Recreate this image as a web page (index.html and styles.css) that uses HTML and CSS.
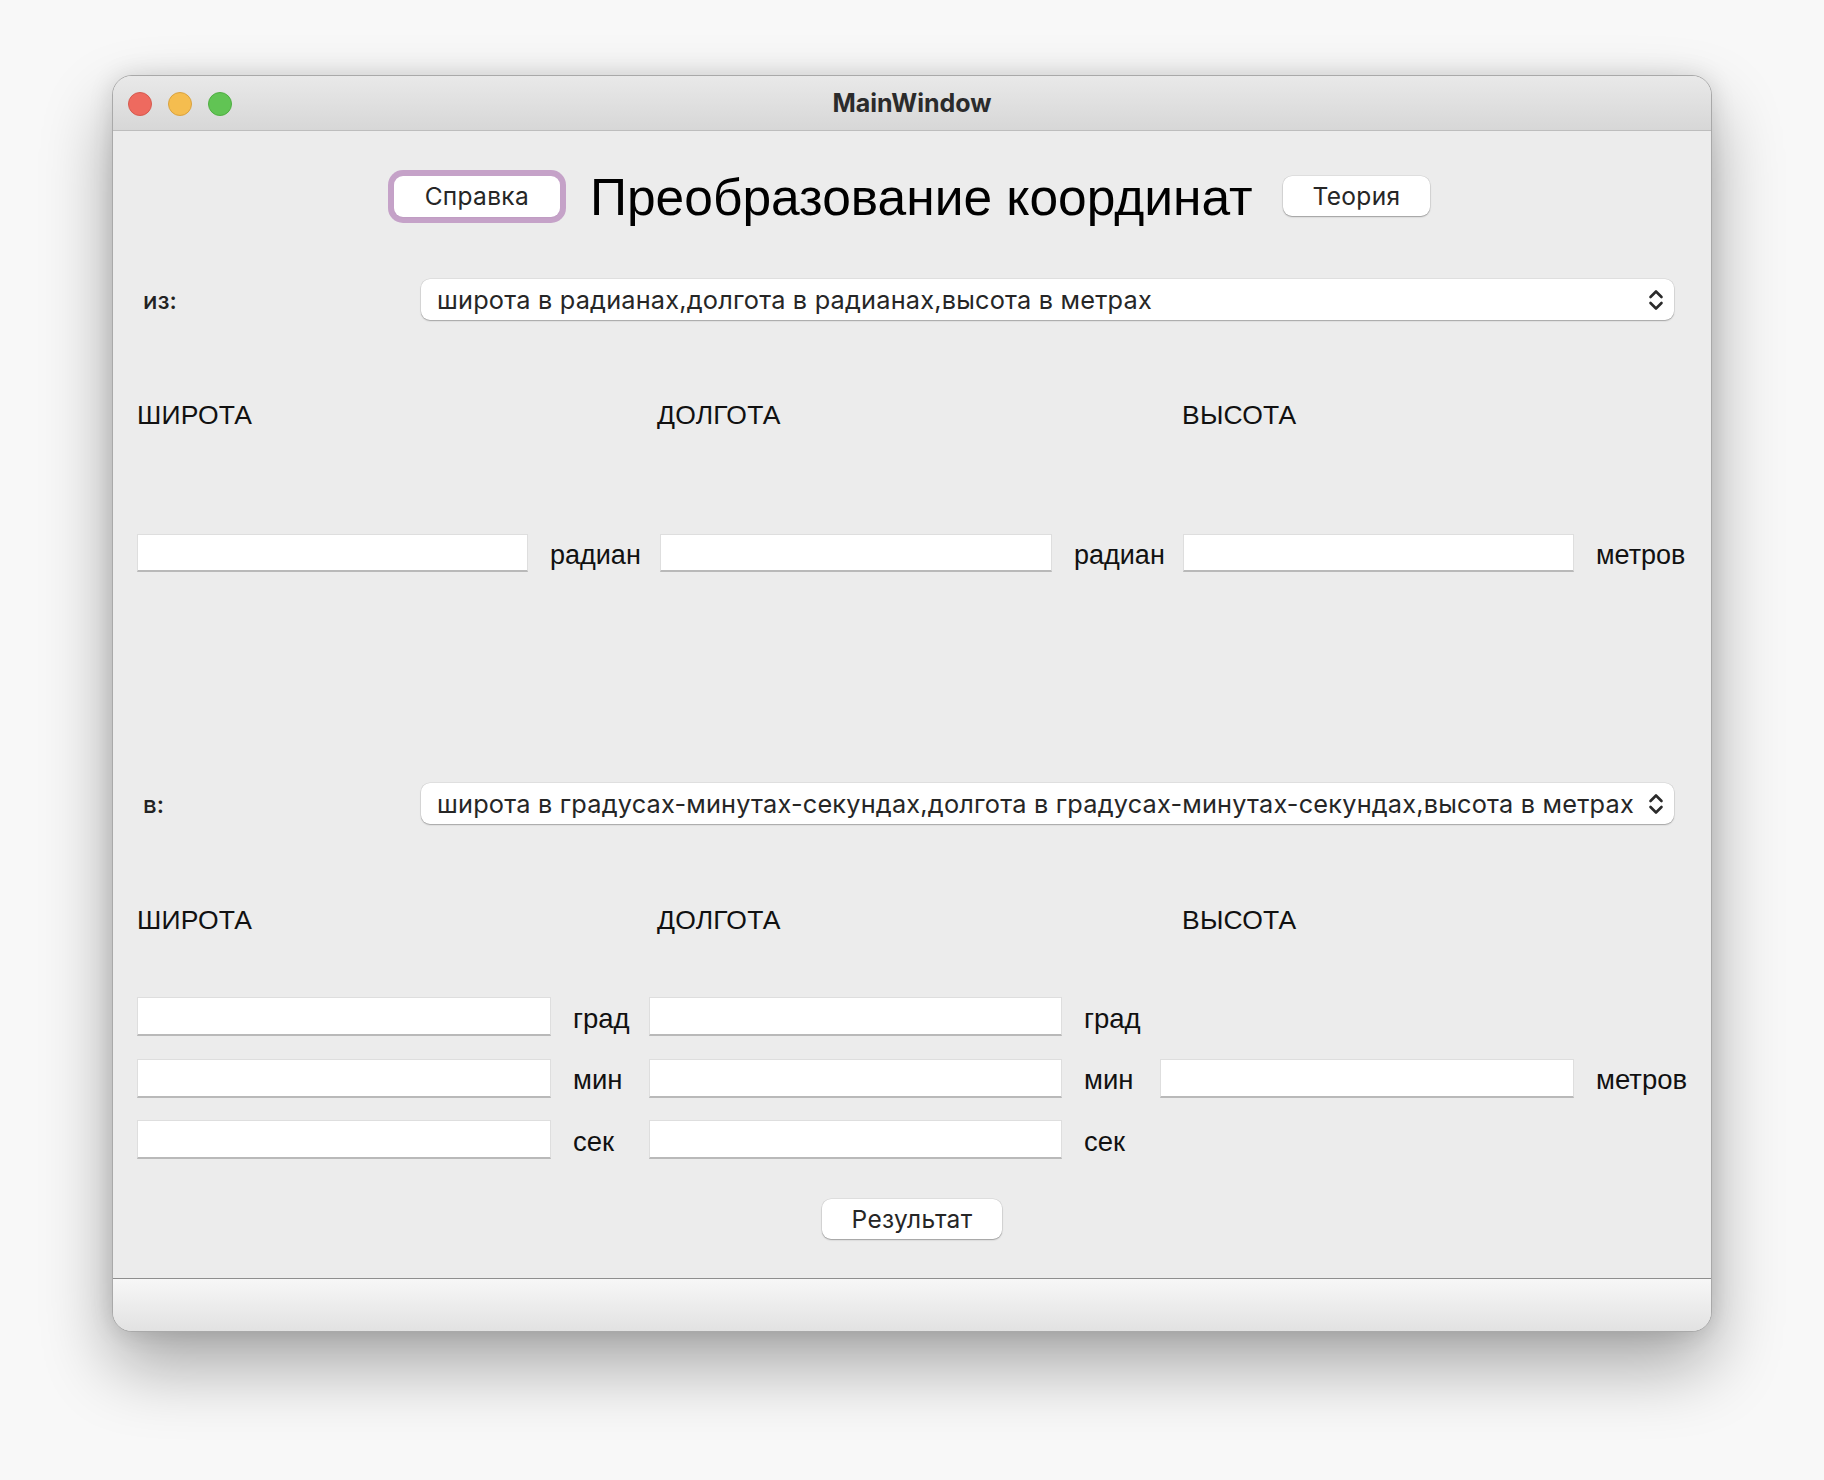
FILE: index.html
```html
<!DOCTYPE html>
<html lang="ru">
<head>
<meta charset="utf-8">
<title>MainWindow</title>
<link rel="stylesheet" href="styles.css">
</head>
<body>
<div class="window">
  <div class="titlebar">
    <div class="lights">
      <span class="light red"></span>
      <span class="light yellow"></span>
      <span class="light green"></span>
    </div>
    <div class="title">MainWindow</div>
    <div></div>
  </div>
  <div class="content">
    <div class="header">
      <button class="btn btn-focus">Справка</button>
      <h1 class="heading">Преобразование координат</h1>
      <button class="btn">Теория</button>
    </div>

    <div class="combo-row">
      <span class="combo-label">из:</span>
      <div class="combo">
        <span class="combo-text">широта в радианах,долгота в радианах,высота в метрах</span>
        <svg class="chev" width="18" height="26" viewBox="0 0 18 26"><path d="M3.5 10 L9 4.5 L14.5 10 M3.5 16 L9 21.5 L14.5 16" fill="none" stroke="#2a2a2a" stroke-width="2.6" stroke-linecap="round" stroke-linejoin="round"/></svg>
      </div>
    </div>

    <div class="axis-labels first">
      <span>ШИРОТА</span><span>ДОЛГОТА</span><span>ВЫСОТА</span>
    </div>

    <div class="fields-rad">
      <div class="field"></div><span class="unit">радиан</span>
      <div class="field"></div><span class="unit">радиан</span>
      <div class="field"></div><span class="unit">метров</span>
    </div>

    <div class="combo-row second">
      <span class="combo-label">в:</span>
      <div class="combo">
        <span class="combo-text">широта в градусах-минутах-секундах,долгота в градусах-минутах-секундах,высота в метрах</span>
        <svg class="chev" width="18" height="26" viewBox="0 0 18 26"><path d="M3.5 10 L9 4.5 L14.5 10 M3.5 16 L9 21.5 L14.5 16" fill="none" stroke="#2a2a2a" stroke-width="2.6" stroke-linecap="round" stroke-linejoin="round"/></svg>
      </div>
    </div>

    <div class="axis-labels second">
      <span>ШИРОТА</span><span>ДОЛГОТА</span><span>ВЫСОТА</span>
    </div>

    <div class="fields-dms">
      <div class="field"></div><span class="unit">град</span>
      <div class="field"></div><span class="unit">град</span>
      <div class="empty"></div><span></span>

      <div class="field"></div><span class="unit">мин</span>
      <div class="field"></div><span class="unit">мин</span>
      <div class="field"></div><span class="unit">метров</span>

      <div class="field"></div><span class="unit">сек</span>
      <div class="field"></div><span class="unit">сек</span>
      <div class="empty"></div><span></span>
    </div>

    <div class="result-row">
      <button class="btn">Результат</button>
    </div>
  </div>
  <div class="statusbar"></div>
</div>
</body>
</html>
```

FILE: styles.css
```css
* { box-sizing: border-box; }

html, body {
  margin: 0;
  padding: 0;
}

body {
  width: 1824px;
  height: 1480px;
  background: #f8f8f8;
  padding: 75px 0 0 112px;
  font-family: "Inter", "Liberation Sans", sans-serif;
  color: #1e1e1e;
  overflow: hidden;
}

.window {
  width: 1600px;
  height: 1257px;
  border: 1px solid #a9a9a9;
  border-radius: 20px;
  overflow: hidden;
  display: flex;
  flex-direction: column;
  background: #ececec;
  box-shadow: 0 34px 70px rgba(0, 0, 0, 0.33), 0 0 24px rgba(0, 0, 0, 0.12);
}

.titlebar {
  height: 55px;
  flex: none;
  display: grid;
  grid-template-columns: 1fr auto 1fr;
  align-items: center;
  background: linear-gradient(#e9e9e9, #d7d7d7);
  border-bottom: 1px solid #bdbdbd;
}

.lights {
  display: flex;
  gap: 16px;
  padding-left: 15px;
  padding-top: 2px;
}

.light {
  width: 24px;
  height: 24px;
  border-radius: 50%;
  display: block;
}
.red { background: #ee6a5f; border: 1px solid #d55a4f; }
.yellow { background: #f5bd4f; border: 1px solid #d9a23f; }
.green { background: #61c454; border: 1px solid #4fae42; }

.title {
  font-family: "Inter", sans-serif;
  font-weight: 700;
  font-size: 25px;
  color: #2b2b2b;
}

.content {
  height: 1147px;
  flex: none;
  padding: 44px 0 0 24px;
}

.header {
  height: 42px;
  display: flex;
  justify-content: center;
  align-items: center;
  gap: 30px;
  margin-left: -24px;
}

.btn {
  height: 40px;
  padding: 0 30px;
  border: none;
  border-radius: 9px;
  background: #ffffff;
  font-family: "Inter", sans-serif;
  font-size: 24.5px;
  color: #262626;
  letter-spacing: 0.3px;
  box-shadow: 0 1px 1.5px rgba(0, 0, 0, 0.3), 0 0 0 0.5px rgba(0, 0, 0, 0.1);
}

.btn-focus {
  height: 41px;
  padding: 0 31px;
  box-shadow: 0 0 0 6px rgba(193, 154, 196, 0.9), 0 1px 1.5px rgba(0, 0, 0, 0.3);
}

.heading {
  margin: 0;
  font-family: "Liberation Sans", sans-serif;
  font-weight: 400;
  font-size: 51.5px;
  line-height: 1;
  color: #000;
  padding-top: 4px;
}

.combo-row {
  margin-top: 62px;
  margin-left: -24px;
  padding: 0 37px 0 30px;
  display: flex;
  align-items: center;
  height: 41px;
}

.combo-row.second {
  margin-top: 211px;
}

.combo-label {
  width: 278px;
  flex: none;
  font-family: "Inter", sans-serif;
  font-size: 24px;
  font-weight: 500;
  color: #222;
  padding-top: 2px;
}

.combo {
  flex: 1;
  height: 41px;
  background: #fff;
  border-radius: 9px;
  display: flex;
  align-items: center;
  justify-content: space-between;
  padding: 0 9px 0 16px;
  box-shadow: 0 1px 1.5px rgba(0, 0, 0, 0.28), 0 0 0 0.5px rgba(0, 0, 0, 0.1);
}

.combo-text {
  font-family: "Inter", sans-serif;
  font-size: 25.3px;
  color: #262626;
  letter-spacing: 0.2px;
  white-space: nowrap;
}

.axis-labels {
  display: grid;
  grid-template-columns: 520px 525px auto;
  height: 30px;
  align-items: center;
  margin-top: 80px;
  font-family: "Liberation Sans", sans-serif;
  font-size: 26.5px;
  letter-spacing: 0.2px;
  color: #111;
}

.axis-labels.second {
  margin-top: 81px;
}

.fields-rad {
  margin-top: 104px;
  display: grid;
  grid-template-columns: 391px 132px 392px 131px 391px auto;
  grid-auto-rows: 38px;
  align-items: center;
}

.fields-dms {
  margin-top: 62px;
  display: grid;
  grid-template-columns: 414px 98px 413px 98px 414px auto;
  grid-auto-rows: 39px;
  row-gap: 22.5px;
  align-items: center;
}

.field {
  height: 100%;
  background: #fff;
  border: 1px solid #dedede;
  border-bottom: 2px solid #b9b9b9;
}

.unit {
  padding-left: 22px;
  font-family: "Liberation Sans", sans-serif;
  font-size: 27px;
  color: #111;
  padding-top: 4px;
}

.fields-dms .unit {
  font-size: 27.5px;
}

.result-row {
  margin-top: 40px;
  margin-left: -24px;
  display: flex;
  justify-content: center;
}

.statusbar {
  flex: 1;
  border-top: 1px solid #8e8e8e;
  background: linear-gradient(#f7f7f7, #e2e2e2);
}
```
